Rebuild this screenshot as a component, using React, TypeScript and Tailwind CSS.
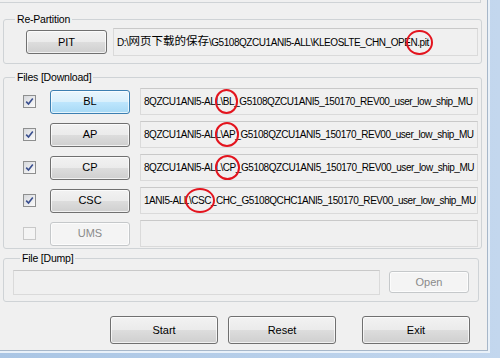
import React from "react"

const font = "font-['Liberation_Sans','Noto_Sans_CJK_SC',sans-serif]"

function Check({ checked, disabled }: { checked?: boolean; disabled?: boolean }) {
  return (
    <div
      className={`w-[13px] h-[13px] border flex items-center justify-center ${
        disabled ? "border-[#c8c8c8] bg-[#f4f4f4]" : "border-[#8e8f8f] bg-gradient-to-br from-[#d6d8dc] to-[#fbfbfb]"
      }`}
    >
      {checked && (
        <svg width="9" height="9" viewBox="0 0 9 9">
          <path d="M1.2 4.6 L3.5 7 L7.8 1.4" fill="none" stroke="#3a4f8f" strokeWidth="1.6" />
        </svg>
      )}
    </div>
  )
}

function Btn({
  label,
  w,
  h,
  hot,
  disabled,
}: {
  label: string
  w: string
  h: string
  hot?: boolean
  disabled?: boolean
}) {
  let cls = "border-[#707070] bg-[linear-gradient(#f2f2f2_0%,#ebebeb_49%,#dddddd_50%,#cfcfcf_100%)] text-black"
  if (hot) cls = "border-[#3c7fb1] bg-[linear-gradient(#eaf6fd_0%,#d9f0fc_49%,#bee6fd_50%,#a7d9f5_100%)] text-black"
  if (disabled) cls = "border-[#c5c8ca] bg-[#f4f4f4] text-[#8a8a8a]"
  return (
    <div className={`${w} ${h} shrink-0 rounded-[3px] border flex items-center justify-center text-[11px] shadow-[inset_0_0_0_1px_rgba(255,255,255,0.7)] ${cls}`}>
      {label}
    </div>
  )
}

function Mark({ text, wide }: { text: string; wide?: boolean }) {
  return (
    <span className="relative">
      {text}
      <span
        className={`absolute ${wide ? "-left-[6px]" : "-left-[4px]"} -right-[4px] -top-[5px] -bottom-[5px] rounded-[50%] border-[2.5px] border-[#e3141e]`}
      />
    </span>
  )
}

function Field({ w, h, children }: { w: string; h: string; children?: React.ReactNode }) {
  return (
    <div
      className={`${w} ${h} shrink-0 border border-[#dadada] border-t-[#c9c9c9] bg-[#f0f0f0] flex items-center pl-[3px] overflow-hidden whitespace-nowrap text-[10px] tracking-[-0.45px]`}
    >
      {children}
    </div>
  )
}

function GroupLabel({ text, left }: { text: string; left: string }) {
  return (
    <span className={`absolute -top-[8px] ${left} px-[2px] bg-[#f0f0f0] leading-[14px] text-[10.5px] tracking-[-0.2px]`}>
      {text}
    </span>
  )
}

export default function App() {
  const rows = [
    { name: "BL", pre: "8QZCU1ANI5-ALL", tag: "\\BL", post: "_G5108QZCU1ANI5_150170_REV00_user_low_ship_MU", hot: true },
    { name: "AP", pre: "8QZCU1ANI5-ALL", tag: "\\AP", post: "_G5108QZCU1ANI5_150170_REV00_user_low_ship_MU" },
    { name: "CP", pre: "8QZCU1ANI5-ALL", tag: "\\CP", post: "_G5108QZCU1ANI5_150170_REV00_user_low_ship_MU" },
    { name: "CSC", pre: "1ANI5-ALL", tag: "\\CSC", post: "_CHC_G5108QCHC1ANI5_150170_REV00_user_low_ship_MU" },
  ]

  return (
    <div className={`w-[500px] h-[358px] overflow-hidden bg-[linear-gradient(90deg,#a9c5e4,#c3d7ee)] text-[11px] text-black ${font}`}>
      <div className="w-[490px] h-[353px] border-r-2 border-b-2 border-[#e9f1f9]">
        <div className="w-[488px] h-[351px] bg-[#f0f0f0] border-r border-b border-[#a7b7c9] flex flex-col">
          {/* bottom edge of the panel above */}
          <div className="w-[481px] h-[3px] border-b border-r border-[#cfd3d6]" />

          {/* Re-Partition */}
          <div className="relative mt-[16px] ml-[3px] w-[479px] h-[45px] border border-[#cfd3d6] rounded-[3px]">
            <GroupLabel text="Re-Partition" left="left-[11px]" />
            <div className="flex items-center mt-[8px] h-[28px]">
              <div className="ml-[22px]">
                <Btn label="PIT" w="w-[81px]" h="h-[24px]" />
              </div>
              <div className="ml-[6px]">
                <Field w="w-[365px]" h="h-[28px]">
                  D:\<span className="text-[11.5px] tracking-normal">网页下载的保存</span>\G5108QZCU1ANI5-ALL\KLEOSLTE_CHN_OPE
                  <Mark text="N.pit" />
                </Field>
              </div>
            </div>
          </div>

          {/* Files [Download] */}
          <div className="relative mt-[13px] ml-[3px] w-[479px] h-[172px] border border-[#cfd3d6] rounded-[3px] pt-[10px] pl-[19px] flex flex-col gap-[6px]">
            <GroupLabel text="Files [Download]" left="left-[11px]" />
            {rows.map((r) => (
              <div key={r.name} className="flex items-center h-[27px]">
                <Check checked />
                <div className="ml-[14px]">
                  <Btn label={r.name} w="w-[80px]" h="h-[24px]" hot={r.hot} />
                </div>
                <div className="ml-[10px]">
                  <Field w="w-[338px]" h="h-[27px]">
                    {r.pre}
                    <Mark text={r.tag} wide={r.name !== "CSC"} />
                    {r.post}
                  </Field>
                </div>
              </div>
            ))}
            <div className="flex items-center h-[27px]">
              <Check disabled />
              <div className="ml-[14px]">
                <Btn label="UMS" w="w-[80px]" h="h-[24px]" disabled />
              </div>
              <div className="ml-[10px]">
                <Field w="w-[338px]" h="h-[27px]" />
              </div>
            </div>
          </div>

          {/* File [Dump] */}
          <div className="relative mt-[9px] ml-[3px] w-[476px] h-[44px] border border-[#cfd3d6] rounded-[3px] flex items-center pl-[9px]">
            <GroupLabel text="File [Dump]" left="left-[16px]" />
            <div className="mt-[4px] flex items-center">
              <Field w="w-[367px]" h="h-[25px]" />
              <div className="ml-[9px]">
                <Btn label="Open" w="w-[80px]" h="h-[22px]" disabled />
              </div>
            </div>
          </div>

          {/* bottom buttons */}
          <div className="flex mt-[14px] ml-[110px]">
            <Btn label="Start" w="w-[108px]" h="h-[28px]" />
            <div className="ml-[10px]">
              <Btn label="Reset" w="w-[108px]" h="h-[28px]" />
            </div>
            <div className="ml-[26px]">
              <Btn label="Exit" w="w-[108px]" h="h-[28px]" />
            </div>
          </div>
        </div>
      </div>
    </div>
  )
}
